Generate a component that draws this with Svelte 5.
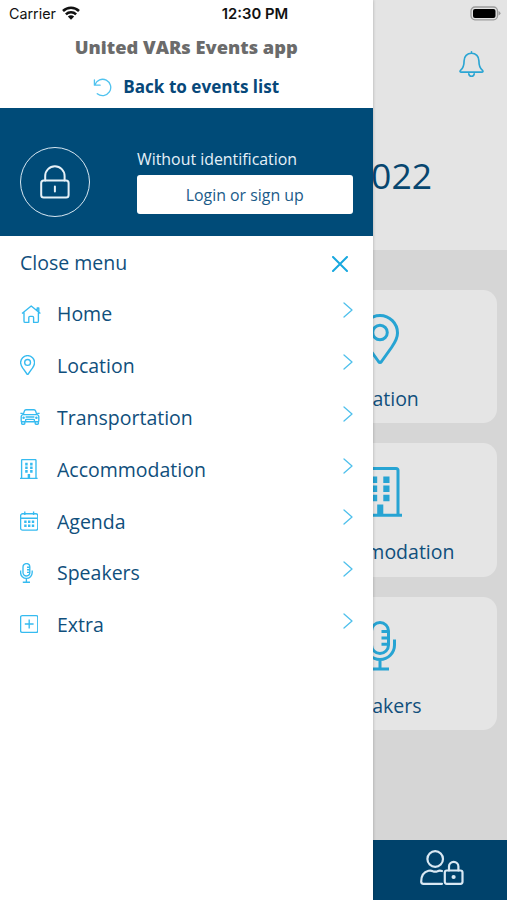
<script lang="ts">
	type Icon = 'home' | 'pin' | 'car' | 'building' | 'calendar' | 'mic' | 'plus';

	export let title = 'United VARs Events app';
	export let time = '12:30 PM';
	export let year = '2022';

	const menu: { label: string; icon: Icon }[] = [
		{ label: 'Home', icon: 'home' },
		{ label: 'Location', icon: 'pin' },
		{ label: 'Transportation', icon: 'car' },
		{ label: 'Accommodation', icon: 'building' },
		{ label: 'Agenda', icon: 'calendar' },
		{ label: 'Speakers', icon: 'mic' },
		{ label: 'Extra', icon: 'plus' }
	];

	const cards: { label: string; icon: Icon }[] = [
		{ label: 'Location', icon: 'pin' },
		{ label: 'Accommodation', icon: 'building' },
		{ label: 'Speakers', icon: 'mic' }
	];

	const viewBoxes: Record<Icon, string> = {
		home: '0 0 55 50',
		pin: '0 0 38 50',
		car: '0 0 50 50',
		building: '0 0 44 50',
		calendar: '0 0 46 50',
		mic: '0 0 32 50',
		plus: '0 0 46 50'
	};
</script>

{#snippet glyph(name: Icon)}
	<svg class="icon" viewBox={viewBoxes[name]}>
		{#if name === 'home'}
			<path d="M5 24 28 5l23 19M43 17V10h4v10M10 21v22q0 3 3 3h9V34q0-3 3-3h6q3 0 3 3v12h9q3 0 3-3V21" />
		{:else if name === 'pin'}
			<path
				d="M19 1.5A17.5 17.5 0 0 1 36.500 19c0 6-3 10-6 14.500L20.500 47.500q-1.500 2-3 0L7.500 33.500c-3-4.500-6-8.500-6-14.500A17.500 17.500 0 0 1 19 1.500z"
			/>
			<circle cx="19" cy="18.500" r="7.300" />
		{:else if name === 'car'}
			<path
				d="M8 19 11 10q1-3 4-3h20q3 0 4 3l3 9M1 16h6M43 16h6M7 19h36q4 1 4 5v11q0 2-2 2H5q-2 0-2-2V24q0-4 4-5zM4 37v4q0 2 2 2h4q2 0 2-2v-4M38 37v4q0 2 2 2h4q2 0 2-2v-4M14 37v-4q0-2 2-2h18q2 0 2 2v4M14 25h22"
			/>
			<circle cx="9" cy="27" r="1.500" />
			<circle cx="41" cy="27" r="1.500" />
		{:else if name === 'building'}
			<path d="M0 48.300h44M4 48V3.500q0-2 2-2h32q2 0 2 2V48" />
			<path
				class="solid"
				d="M13 9.500h6.200V16H13zM25.300 9.500h6.200V16h-6.200zM13 18.500h6.200V25H13zM25.300 18.500h6.200V25h-6.200zM13 27.800h6.200v6.400H13zM25.300 27.800h6.200v6.400h-6.200zM19.200 37.500h6.100V48h-6.100z"
			/>
		{:else if name === 'calendar'}
			<rect x="1.500" y="7" width="43" height="41" rx="5" />
			<path d="M2 18h42M12 1v9M34 1v9" />
			<path
				class="solid"
				d="M10.500 24h6v6h-6zM20 24h6v6h-6zM29.500 24h6v6h-6zM10.500 34h6v6h-6zM20 34h6v6h-6zM29.500 34h6v6h-6z"
			/>
		{:else if name === 'mic'}
			<rect x="7.500" y="1.500" width="17" height="31" rx="8.500" />
			<path d="M17.500 10.500h7M17.500 17h7M17.500 23.300h7M30.500 18.500V24a14.500 14.500 0 0 1-29 0v-5.500M16 38.500V48M7 48h18" />
		{:else}
			<rect x="1.500" y="4" width="43" height="42" rx="4" />
			<path d="M23 14v22M12 25h22" />
		{/if}
	</svg>
{/snippet}

<div class="screen">
	<main class="page">
		<header class="page-header">
			<svg class="bell" viewBox="0 0 26 28">
				<path
					d="M13 1.200v1.600M13 2.800c-4.600 0-7.700 3.200-7.700 7.700 0 5.500-.8 7.500-3.500 9.800-1.300 1.200-.8 2.200.6 2.200h21.200c1.400 0 1.900-1 .6-2.200-2.700-2.300-3.500-4.300-3.500-9.800 0-4.500-3.100-7.700-7.700-7.700zM10.200 24.300c.3 3.300 5.300 3.300 5.600 0"
				/>
			</svg>
			<h1>{year}</h1>
		</header>
		<div class="cards">
			{#each cards as card}
				<div class="card">
					{@render glyph(card.icon)}
					<span>{card.label}</span>
				</div>
			{/each}
		</div>
		<footer class="tabbar">
			<svg class="user" viewBox="0 0 44 36">
				<circle cx="15.200" cy="9" r="7.800" />
				<path d="M22 21q-2.500-.8-4.500.2-2.300 1-4.600 0-2-1-4.400-.4C4 22 1.200 26 1.200 31.500q0 2.300 2.300 2.300H22" />
				<rect x="24.800" y="20.500" width="17.700" height="13.300" rx="2" />
				<path d="M29 20.500v-4a4.700 4.700 0 0 1 9.400 0v4" />
				<circle class="solid" cx="33.600" cy="27" r="2.100" />
			</svg>
		</footer>
	</main>

	<aside class="drawer">
		<div class="heading">
			<h2>{title}</h2>
			<div class="back">
				<svg viewBox="0 0 20 20">
					<path d="M1.500 2v5.500h6M2 7A8.600 8.600 0 1 1 4.500 16.500" />
				</svg>
				<span>Back to events list</span>
			</div>
		</div>
		<div class="login">
			<div class="avatar">
				<svg viewBox="0 0 30 34">
					<rect x="1.200" y="15.500" width="27.400" height="17" rx="2.500" />
					<path d="M5.200 15.500v-4.500a9.700 9.700 0 0 1 19.400 0v4.500M14.900 21.500v5" />
				</svg>
			</div>
			<div class="identity">
				<span>Without identification</span>
				<button>Login or sign up</button>
			</div>
		</div>
		<div class="row close">
			<span>Close menu</span>
			<svg viewBox="0 0 16 16"><path d="M1 1l14 14M15 1 1 15" /></svg>
		</div>
		<nav>
			{#each menu as item}
				<div class="row">
					<div class="symbol">{@render glyph(item.icon)}</div>
					<span>{item.label}</span>
					<svg class="chevron" viewBox="0 0 10 16"><path d="M1 1l8 7-8 7" /></svg>
				</div>
			{/each}
		</nav>
	</aside>

	<div class="status">
		<div class="carrier">
			<span>Carrier</span>
			<svg viewBox="0 0 18 14">
				<path d="M1 5a11.300 11.300 0 0 1 16 0M3.900 8.300a7.200 7.200 0 0 1 10.200 0" />
				<path class="solid" d="M9 13.700 5.800 10.600q3.200-2.600 6.400 0z" />
			</svg>
		</div>
		<span class="time">{time}</span>
		<svg class="battery" viewBox="0 0 31 15">
			<rect class="shell" x="1" y="1" width="26.500" height="12.800" rx="4" />
			<rect class="charge" x="3" y="2.900" width="22.500" height="9" rx="2" />
			<path class="tip" d="M28.500 5v4.600q2-.8 2-2.300T28.500 5z" />
		</svg>
	</div>
</div>

<style>
	:global(body) {
		margin: 0;
	}

	.screen {
		position: relative;
		width: 507px;
		height: 900px;
		overflow: hidden;
		font-family: 'Open Sans', 'Noto Sans', sans-serif;
		color: #104f7c;
	}

	svg {
		display: block;
		flex: none;
		fill: none;
		stroke: currentColor;
		stroke-linecap: round;
		stroke-linejoin: round;
	}

	.solid {
		fill: currentColor;
		stroke: none;
	}

	.icon {
		height: 100%;
		stroke-width: 3;
		stroke-linecap: butt;
	}

	.page {
		display: flex;
		flex-direction: column;
		height: 100%;
		background: #d6d6d6;
	}

	.page-header {
		display: flex;
		flex-direction: column;
		align-items: flex-end;
		box-sizing: border-box;
		height: 250px;
		padding: 50px 23px 0 0;
		background: #e4e4e4;
	}

	.bell {
		width: 25px;
		height: 28px;
		color: #2ba5d3;
		stroke-width: 1.7;
	}

	h1 {
		margin: 71px 52px 0 0;
		font-size: 35.500px;
		font-weight: 400;
		line-height: 52px;
		color: #07466f;
	}

	.cards {
		display: flex;
		flex: 1;
		flex-direction: column;
		align-items: flex-end;
		gap: 20px;
		padding: 39.500px 10px 0 0;
	}

	.card {
		display: flex;
		flex-direction: column;
		align-items: center;
		box-sizing: border-box;
		width: 234px;
		height: 133.500px;
		padding-top: 24px;
		border-radius: 14px;
		background: #e5e5e5;
	}

	.card .icon {
		height: 50px;
		color: #27a4d3;
	}

	.card span {
		margin-top: 22px;
		font-size: 19.500px;
		line-height: 26px;
	}

	.tabbar {
		display: flex;
		justify-content: flex-end;
		box-sizing: border-box;
		height: 60px;
		padding: 9.500px 43px 0 0;
		background: #00426b;
		color: #d9e8f3;
	}

	.user {
		width: 44px;
		height: 36px;
		stroke-width: 2.200;
	}

	.drawer {
		position: absolute;
		top: 0;
		left: 0;
		width: 372.500px;
		height: 100%;
		background: #fff;
		box-shadow: 0 0 3px rgba(0, 0, 0, 0.25);
	}

	.heading {
		display: flex;
		flex-direction: column;
		align-items: center;
		box-sizing: border-box;
		height: 108px;
		padding-top: 34px;
	}

	h2 {
		margin: 0;
		font-size: 18.300px;
		font-weight: 800;
		line-height: 26px;
		color: #6b6b6b;
	}

	.back {
		display: flex;
		align-items: center;
		gap: 11px;
		margin-top: 14px;
		font-size: 17.100px;
		font-weight: 700;
		line-height: 26px;
		color: #07487a;
	}

	.back svg {
		width: 19px;
		height: 19px;
		color: #50c3ef;
		stroke-width: 1.400;
	}

	.login {
		display: flex;
		align-items: flex-start;
		gap: 47px;
		box-sizing: border-box;
		height: 128px;
		padding: 39px 20px 0;
		background: #004b78;
		color: #e6f1f8;
	}

	.avatar {
		display: flex;
		align-items: center;
		justify-content: center;
		box-sizing: border-box;
		width: 70px;
		height: 70px;
		border: 1.500px solid #d7e7f2;
		border-radius: 50%;
	}

	.avatar svg {
		width: 30px;
		height: 34px;
		stroke-width: 2;
	}

	.identity {
		display: flex;
		flex: 1;
		flex-direction: column;
		font-size: 15.900px;
		line-height: 24px;
	}

	button {
		height: 39px;
		margin-top: 4px;
		padding: 0;
		border: 0;
		border-radius: 3px;
		background: #fff;
		font: inherit;
		color: #1b5b89;
	}

	.row {
		display: flex;
		align-items: center;
		height: 51.800px;
		padding: 0 20px;
		font-size: 19.500px;
		line-height: 28px;
	}

	.row span {
		flex: 1;
		padding-top: 1.500px;
	}

	.close svg {
		width: 16px;
		height: 16px;
		margin: 4px 5px 0 0;
		color: #18a8df;
		stroke-width: 2;
	}

	.symbol {
		width: 37px;
		height: 20px;
		color: #36bbf0;
	}

	.symbol .icon {
		stroke-width: 3.400;
	}

	.chevron {
		width: 10px;
		height: 16px;
		margin: 0 0 7px;
		color: #4fc0ec;
		stroke-width: 1.300;
	}

	.status {
		position: absolute;
		top: 0;
		left: 0;
		display: grid;
		grid-template-columns: 1fr auto 1fr;
		align-items: center;
		box-sizing: border-box;
		width: 100%;
		height: 27px;
		padding: 0 6px 0 9px;
		font-family: Inter, sans-serif;
		font-size: 14.300px;
		color: #111;
	}

	.carrier {
		display: flex;
		align-items: center;
		gap: 6px;
	}

	.carrier svg {
		width: 18px;
		height: 14px;
		margin-top: -1px;
		stroke-width: 2.500;
		stroke-linecap: butt;
	}

	.time {
		font-size: 14.800px;
		font-weight: 600;
	}

	.battery {
		justify-self: end;
		width: 31px;
		height: 15px;
	}

	.shell {
		stroke: #9b9b9b;
		stroke-width: 1.300;
	}

	.charge {
		fill: #000;
		stroke: none;
	}

	.tip {
		fill: #9b9b9b;
		stroke: none;
	}
</style>
